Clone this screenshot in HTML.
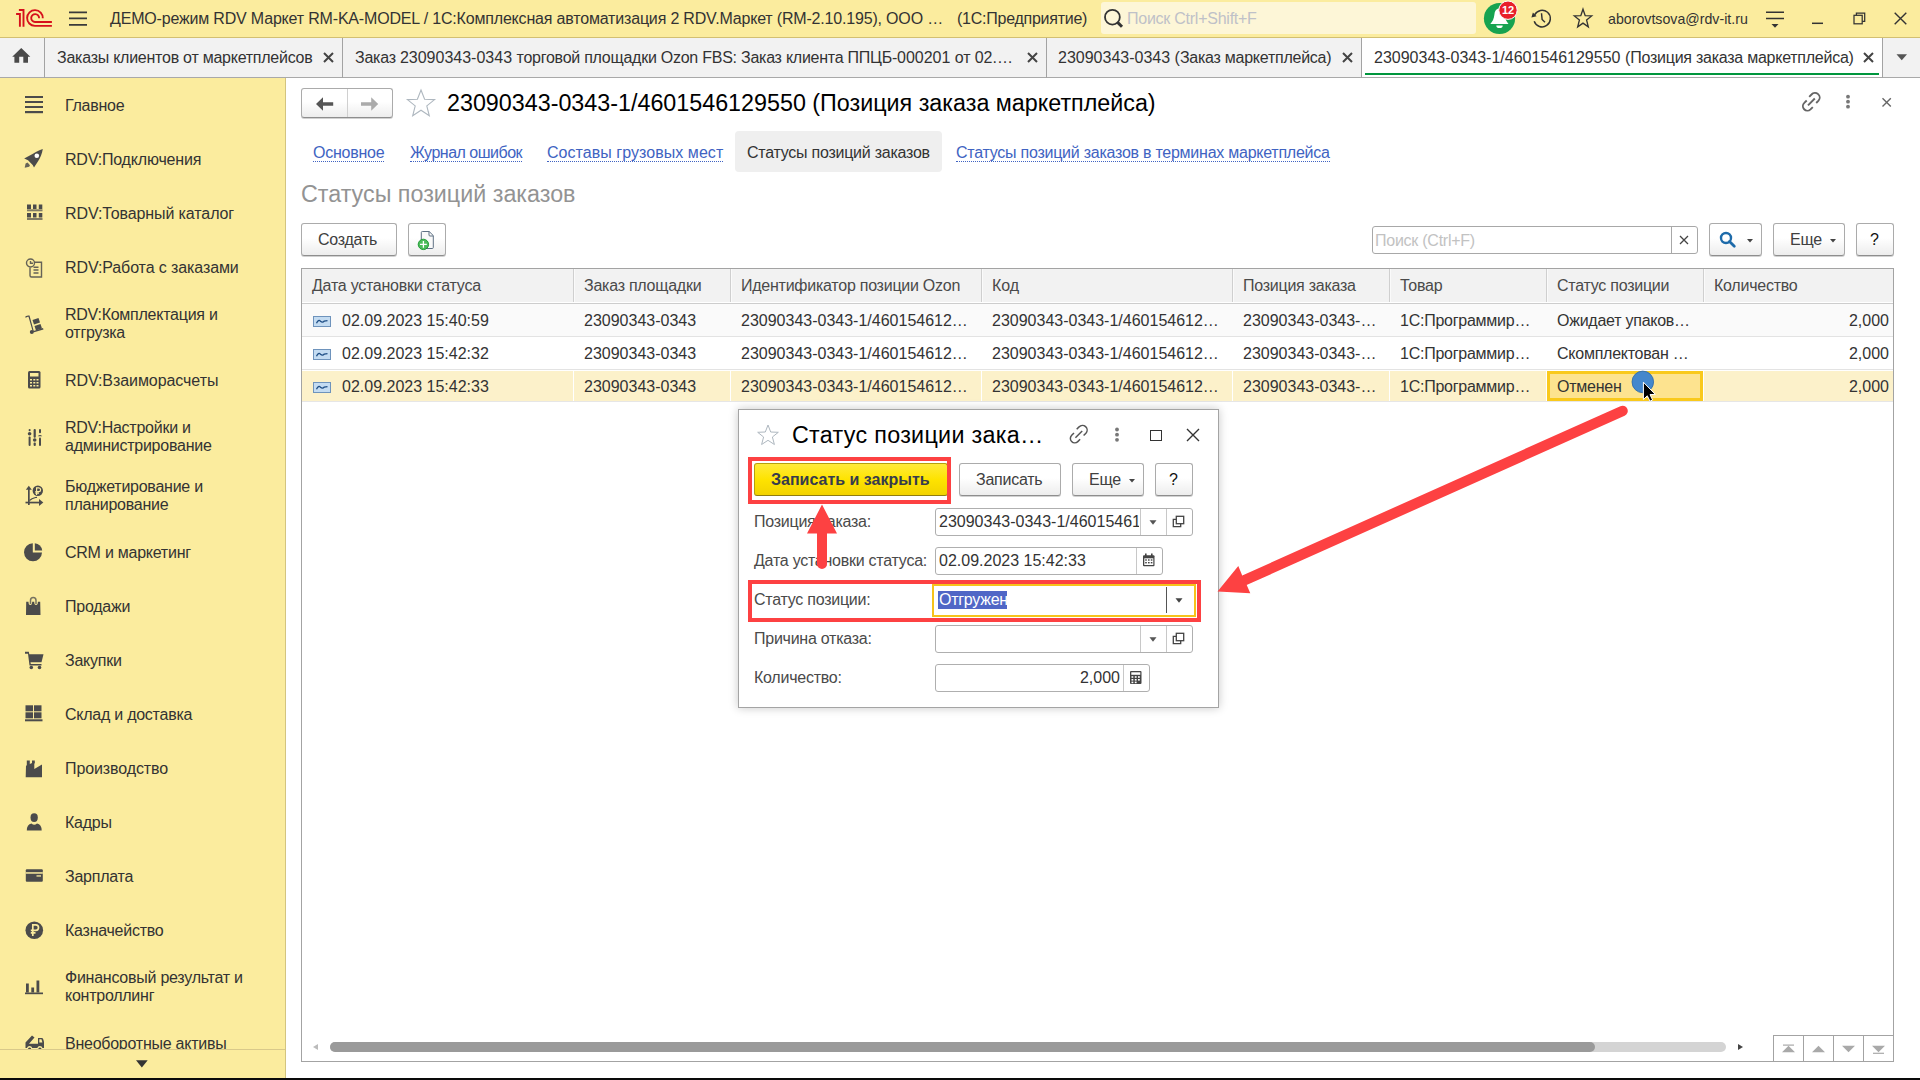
<!DOCTYPE html>
<html><head><meta charset="utf-8">
<style>
*{box-sizing:border-box}
html,body{margin:0;padding:0}
body{width:1920px;height:1080px;position:relative;overflow:hidden;background:#fff;font-family:"Liberation Sans",sans-serif;font-size:16px;color:#333}
.a{position:absolute}
.t{position:absolute;white-space:nowrap;line-height:18px}
.cy{letter-spacing:-0.25px}
svg{position:absolute;overflow:visible}
/* header */
#hdr{left:0;top:0;width:1920px;height:38px;background:#FBEC9E;border-bottom:1px solid #D2BF72}
#tabs{left:0;top:38px;width:1920px;height:40px;background:#F2F2F2;border-bottom:1px solid #A9A9A9}
.tsep{position:absolute;top:38px;width:1px;height:40px;background:#A3A3A3}
#side{left:0;top:78px;width:286px;height:1000px;background:#FBEC9E;border-right:1px solid #D3C47F;overflow:hidden}
.si{position:absolute;left:65px;white-space:nowrap;line-height:18px;color:#333;letter-spacing:-0.25px}
.btn{position:absolute;border:1px solid #ABABAB;border-bottom-color:#8E8E8E;border-radius:3px;background:linear-gradient(#fff 0%,#fff 45%,#EDEDED 100%);box-shadow:0 1px 0 rgba(0,0,0,.18)}
.link{color:#4063C2;border-bottom:1px dotted #4063C2}
</style></head><body>

<!-- ============ HEADER ============ -->
<div id="hdr" class="a"></div>
<!-- 1C logo -->
<svg width="60" height="36" style="left:0;top:0" viewBox="0 0 60 36">
 <g fill="none" stroke="#D6101C" stroke-width="1.9">
 <path d="M16.1 14 H19.9 V26.8"/>
 <path d="M18.9 10 H23.5 V26.8"/>
 <path d="M42.8 18.3 A7.85 7.85 0 1 0 34.9 25.85 H51.9" stroke-linecap="butt"/>
 <path d="M39.1 18.3 A3.95 3.95 0 1 0 35 22 H51.9"/>
 </g>
</svg>
<!-- hamburger -->
<svg width="20" height="20" style="left:68px;top:8px" viewBox="0 0 20 20"><path d="M1 4.4 H19 M1 10.4 H19 M1 16.8 H19" stroke="#3A3A3A" stroke-width="1.7"/></svg>
<div class="t" style="left:110px;top:10px;letter-spacing:-0.18px;color:#333">ДЕМО-режим RDV Маркет RM-KA-MODEL / 1С:Комплексная автоматизация 2 RDV.Маркет (RM-2.10.195), ООО …</div>
<div class="t cy" style="left:957px;top:10px;color:#333">(1С:Предприятие)</div>
<!-- search -->
<div class="a" style="left:1101px;top:2px;width:375px;height:32px;background:#FDF6D7;border-radius:3px"></div>
<svg width="24" height="24" style="left:1103px;top:8px" viewBox="0 0 24 24">
 <circle cx="9.4" cy="9.2" r="7.4" fill="none" stroke="#333" stroke-width="1.8"/>
 <path d="M14.6 14.4 L19 18.8" stroke="#333" stroke-width="3"/>
</svg>
<div class="t cy" style="left:1127px;top:10px;color:#BFC1C8">Поиск Ctrl+Shift+F</div>
<!-- bell -->
<svg width="36" height="36" style="left:1482px;top:1px" viewBox="0 0 36 36">
 <circle cx="17.5" cy="17.5" r="15.6" fill="#17A350"/>
 <path d="M8.3 23 C10.5 20.5 12 18 12.5 13 C13 9 15 7.5 17.5 7.5 C20 7.5 22 9 22.5 13 C23 18 24.5 20.5 26.5 23 Z" fill="#fff"/>
 <path d="M14.3 24.5 H20.7 A3.2 2.6 0 0 1 14.3 24.5 Z" fill="#fff"/>
 <circle cx="26" cy="9.2" r="9.2" fill="#E8202A" stroke="#fff" stroke-width="1"/>
 <text x="26" y="13.3" font-family="Liberation Sans" font-weight="bold" font-size="11" fill="#fff" text-anchor="middle">12</text>
</svg>
<!-- history -->
<svg width="22" height="22" style="left:1530px;top:8px" viewBox="0 0 22 22">
 <path d="M4.6 6.9 A8.3 8.3 0 1 1 4.2 13.3" fill="none" stroke="#333" stroke-width="1.45"/>
 <path d="M1.4 9.5 L6.6 8.3 L2.9 4.5 Z" fill="#333"/>
 <path d="M11.5 5.3 L12.1 11.4 L15 14.3" fill="none" stroke="#333" stroke-width="1.45"/>
</svg>
<!-- star -->
<svg width="22" height="22" style="left:1572px;top:8px" viewBox="0 0 22 22">
 <path d="M11 1.2 L13.2 7.6 L19.7 7.9 L14.6 12.1 L16.3 18.8 L11 15.1 L5.7 18.8 L7.4 12.1 L2.3 7.9 L8.8 7.6 Z" fill="none" stroke="#333" stroke-width="1.35" stroke-linejoin="miter"/>
</svg>
<div class="t" style="left:1608px;top:10px;font-size:14.2px;color:#333">aborovtsova@rdv-it.ru</div>
<!-- filter icon -->
<svg width="20" height="20" style="left:1765px;top:8px" viewBox="0 0 20 20"><path d="M1 4.2 H19 M1 10.5 H19" stroke="#333" stroke-width="1.4"/><path d="M6.5 16 H13.5 L10 19.8 Z" fill="#333"/></svg>
<!-- window buttons -->
<svg width="14" height="4" style="left:1811px;top:21px" viewBox="0 0 14 4"><path d="M1 2.3 H12" stroke="#333" stroke-width="1.5"/></svg>
<svg width="14" height="14" style="left:1853px;top:12px" viewBox="0 0 14 14">
 <rect x="1" y="3.3" width="8.2" height="8.5" fill="none" stroke="#333" stroke-width="1.25"/>
 <path d="M3.4 3.3 V1 H11.7 V9.3 H9.2" fill="none" stroke="#333" stroke-width="1.25"/>
</svg>
<svg width="13" height="13" style="left:1894px;top:11.5px" viewBox="0 0 13 13"><path d="M0.7 0.7 L12.3 12.3 M12.3 0.7 L0.7 12.3" stroke="#333" stroke-width="1.4"/></svg>

<!-- ============ TABS ============ -->
<div id="tabs" class="a"></div>
<div class="a" style="left:1362px;top:38px;width:520px;height:39px;background:#fff"></div>
<div class="a" style="left:1365px;top:73px;width:514px;height:2px;background:#00963E"></div>
<div class="tsep" style="left:44px"></div>
<div class="tsep" style="left:342px"></div>
<div class="tsep" style="left:1046px"></div>
<div class="tsep" style="left:1361px"></div>
<div class="tsep" style="left:1882px"></div>
<svg width="20" height="16" style="left:12px;top:48px" viewBox="0 0 20 16">
 <path d="M0.2 8.7 L9.25 0 L18.3 8.7 H16 V14.8 H11.3 V8.7 H7.2 V14.8 H2.4 V8.7 Z" fill="#4A4A4A"/>
</svg>
<div class="t cy" style="left:57px;top:49px">Заказы клиентов от маркетплейсов</div>
<svg width="11" height="11" style="left:323px;top:52px" viewBox="0 0 11 11"><path d="M1 1 L10 10 M10 1 L1 10" stroke="#444" stroke-width="2"/></svg>
<div class="t" style="left:355px;top:49px"><span class="cy">Заказ </span>23090343-0343 <span class="cy">торговой площадки Ozon FBS: Заказ клиента ППЦБ-</span>000201 <span class="cy">от</span> 02.…</div>
<svg width="11" height="11" style="left:1027px;top:52px" viewBox="0 0 11 11"><path d="M1 1 L10 10 M10 1 L1 10" stroke="#444" stroke-width="2"/></svg>
<div class="t" style="left:1058px;top:49px">23090343-0343 (<span class="cy">Заказ маркетплейса</span>)</div>
<svg width="11" height="11" style="left:1342px;top:52px" viewBox="0 0 11 11"><path d="M1 1 L10 10 M10 1 L1 10" stroke="#444" stroke-width="2"/></svg>
<div class="t" style="left:1374px;top:49px">23090343-0343-1/4601546129550 (<span class="cy">Позиция заказа маркетплейса</span>)</div>
<svg width="11" height="11" style="left:1863px;top:52px" viewBox="0 0 11 11"><path d="M1 1 L10 10 M10 1 L1 10" stroke="#444" stroke-width="2"/></svg>
<svg width="12" height="7" style="left:1896px;top:54px" viewBox="0 0 12 7"><path d="M0.5 0.3 H11 L5.75 6.3 Z" fill="#555"/></svg>

<!-- ============ SIDEBAR ============ -->
<div id="side" class="a">
</div>
<!--SIDEBAR_ITEMS-->
<div class="a" style="left:0;top:78px;width:285px;height:971px;overflow:hidden">
<div class="a" style="left:0;top:-78px;width:285px;height:1100px">
<div class="si" style="top:97px">Главное</div>
<svg width="19" height="19" style="left:25px;top:96px" viewBox="0 0 19 19"><rect x="0" y="0" width="18" height="2" fill="#4B4B4B"/><rect x="0" y="5" width="18" height="2" fill="#4B4B4B"/><rect x="0" y="10" width="18" height="2" fill="#4B4B4B"/><rect x="0" y="15" width="18" height="2.2" fill="#4B4B4B"/></svg>
<div class="si" style="top:151px;letter-spacing:-0.18px">RDV:Подключения</div>
<svg width="19" height="19" style="left:25px;top:150px" viewBox="0 0 19 19"><path d="M17.8 -0.9 C14 0.5 10.5 2.3 8 3.8 L-0.8 8.4 L3 10.3 L7.7 15 L9 17.5 L12.9 11.6 C15.3 8.3 17 4 17.8 -0.9 Z" fill="#4B4B4B"/><circle cx="11.8" cy="5.7" r="2.3" fill="#fff"/><path d="M-0.3 17.7 L0.6 13.6 L2.5 12.6 L5 15.2 L4.2 16.8 Z" fill="#4B4B4B" opacity="0.85"/></svg>
<div class="si" style="top:205px;letter-spacing:-0.1px">RDV:Товарный каталог</div>
<svg width="19" height="19" style="left:25px;top:204px" viewBox="0 0 19 19"><g fill="#4B4B4B"><rect x="2" y="0.5" width="4" height="4.5"/><rect x="8" y="0.5" width="3.5" height="4.5"/><rect x="13.8" y="0.5" width="3.5" height="4.5"/><rect x="2" y="5.3" width="15.5" height="2" opacity="0.7"/><rect x="2" y="9" width="4" height="4.5"/><rect x="8" y="9" width="3.5" height="4.5"/><rect x="13.8" y="9" width="3.5" height="4.5"/><rect x="2" y="14" width="15.5" height="2" opacity="0.7"/></g></svg>
<div class="si" style="top:259px;letter-spacing:-0.1px">RDV:Работа с заказами</div>
<svg width="19" height="19" style="left:25px;top:258px" viewBox="0 0 19 19"><g fill="none" stroke="#4B4B4B" stroke-width="1.4" opacity="0.85"><circle cx="5.5" cy="5" r="4"/><path d="M5.5 3 V5.3 H8"/><path d="M9.5 4.2 H16.5 V19 H6.5 Q5 19 5 17.5 V9.5"/><path d="M8.5 9.2 H13.5 M8.5 12 H13.5 M8.5 15 H13.5"/></g></svg>
<div class="si" style="top:306px">RDV:Комплектация и<br>отгрузка</div>
<svg width="19" height="19" style="left:25px;top:314px" viewBox="0 0 19 19"><g fill="#4B4B4B"><path d="M0 3 Q1 1 4.5 1.5 L9 18 L8 18.5 L3.5 2.8 Q2 2.6 1 3.8 Z"/><circle cx="6.8" cy="18" r="2"/><path d="M8.5 17 L18 14 L18.5 15.4 L9 18.3 Z"/><path d="M7.5 6 L13.5 4 L15 8.5 L9 10.5 Z"/><path d="M9.5 12 L15.5 10 L17 14.5 L11 16.5 Z"/></g></svg>
<div class="si" style="top:372px;letter-spacing:-0.07px">RDV:Взаиморасчеты</div>
<svg width="19" height="19" style="left:25px;top:371px" viewBox="0 0 19 19"><g fill="#4B4B4B"><rect x="3" y="0" width="12.5" height="17.5" rx="1.5"/></g><rect x="5" y="2" width="8.5" height="3.5" fill="#FBEC9E"/><g fill="#FBEC9E"><rect x="5" y="8" width="2" height="1.5"/><rect x="8.3" y="8" width="2" height="1.5"/><rect x="11.5" y="8" width="2" height="1.5"/><rect x="5" y="11" width="2" height="1.5"/><rect x="8.3" y="11" width="2" height="1.5"/><rect x="11.5" y="11" width="2" height="1.5"/><rect x="5" y="14" width="2" height="1.5"/><rect x="8.3" y="14" width="2" height="1.5"/><rect x="11.5" y="14" width="2" height="1.5"/></g></svg>
<div class="si" style="top:419px">RDV:Настройки и<br>администрирование</div>
<svg width="19" height="19" style="left:25px;top:428px" viewBox="0 0 19 19"><g fill="#4B4B4B"><rect x="3.6" y="1" width="2" height="2.3" rx="1"/><circle cx="4.6" cy="5.8" r="1.8"/><rect x="3.6" y="8.5" width="2" height="9.5" rx="1"/><rect x="8.6" y="1" width="2.2" height="8.8" rx="1"/><circle cx="9.7" cy="12" r="1.8"/><rect x="8.6" y="14.5" width="2.2" height="3.5" rx="1"/><rect x="14" y="1" width="2" height="4.3" rx="1"/><path d="M12.8 8.3 Q15 5.8 17.2 8.3 Z"/><rect x="14" y="9.5" width="2" height="8.5" rx="1"/></g></svg>
<div class="si" style="top:478px">Бюджетирование и<br>планирование</div>
<svg width="19" height="19" style="left:25px;top:486px" viewBox="0 0 19 19"><g fill="#4B4B4B"><path d="M0.8 3.7 L3.8 -0.2 L6.8 3.7 Z"/><rect x="3" y="3" width="1.7" height="16"/><rect x="0.5" y="15.7" width="14" height="1.7"/><path d="M14 13 L18.3 16.5 L14 20 Z"/><circle cx="12.8" cy="4.7" r="5.2"/><path d="M4.5 14.5 L7 12.7 L10.5 11.5 L12 11.3" fill="none" stroke="#4B4B4B" stroke-width="1.2"/></g><path d="M11.6 9 V1.8 H13.8 Q15.6 1.8 15.6 3.7 Q15.6 5.6 13.8 5.6 H10.3 M10.3 7.2 H14" fill="none" stroke="#FBEC9E" stroke-width="1.2"/></svg>
<div class="si" style="top:544px">CRM и маркетинг</div>
<svg width="19" height="19" style="left:25px;top:543px" viewBox="0 0 19 19"><g fill="#4B4B4B"><path d="M7.8 0.3 V9.5 H17 A9 9 0 1 1 7.8 0.3 Z"/><path d="M9.8 0.3 A8 8 0 0 1 17.2 7.6 H9.8 Z"/></g></svg>
<div class="si" style="top:598px">Продажи</div>
<svg width="19" height="19" style="left:25px;top:597px" viewBox="0 0 19 19"><g fill="#4B4B4B"><path d="M1.2 4.8 H3.5 Q3.5 8 5.3 8 Q7.2 8 7.2 4.8 H9.2 Q9.2 8 11 8 Q12.9 8 12.9 4.8 H15.2 L15.5 18 H1 Z"/></g><path d="M5.5 7 V3.5 Q5.5 0.6 8.2 0.6 Q11 0.6 11 3.5 V7" fill="none" stroke="#4B4B4B" stroke-width="1.5" opacity="0.75"/></svg>
<div class="si" style="top:652px">Закупки</div>
<svg width="19" height="19" style="left:25px;top:651px" viewBox="0 0 19 19"><g fill="#4B4B4B"><path d="M0 0.8 H3.8 L4.3 3.2 H18.5 L16.5 11.3 H5.5 L5.8 13 H16.5 V14.5 H4.5 L3 2.7 H0 Z"/><circle cx="6.3" cy="16.5" r="1.8"/><circle cx="14.5" cy="16.5" r="1.8"/></g></svg>
<div class="si" style="top:706px">Склад и доставка</div>
<svg width="19" height="19" style="left:25px;top:705px" viewBox="0 0 19 19"><g fill="#4B4B4B"><rect x="0.5" y="0.3" width="7.5" height="6"/><rect x="9" y="0.3" width="7.5" height="6"/><rect x="0.5" y="7.3" width="7.5" height="6"/><rect x="9" y="7.3" width="7.5" height="6"/><rect x="0" y="14.3" width="17.5" height="2"/></g></svg>
<div class="si" style="top:760px;letter-spacing:-0.1px">Производство</div>
<svg width="19" height="19" style="left:25px;top:759px" viewBox="0 0 19 19"><g fill="#4B4B4B"><path d="M1 6.8 L9.3 3 V10 L17 5.5 V18.3 H0.7 Z"/><path d="M1.8 1.5 H4.8 V6.5 L1.8 7.5 Z"/><path d="M7 1.5 H9.8 V4.3 L7 5.3 Z"/></g></svg>
<div class="si" style="top:814px">Кадры</div>
<svg width="19" height="19" style="left:25px;top:813px" viewBox="0 0 19 19"><g fill="#4B4B4B"><path d="M5.5 4.5 Q5.5 0.3 9.2 0.3 Q12.8 0.3 12.8 4.5 Q12.8 9 9.2 9 Q5.5 9 5.5 4.5 Z"/><path d="M1.8 17.5 Q1.8 11.5 6.5 10.5 Q9.2 13 12 10.5 Q16.7 11.5 16.7 17.5 Z"/></g></svg>
<div class="si" style="top:868px">Зарплата</div>
<svg width="19" height="19" style="left:25px;top:867px" viewBox="0 0 19 19"><g fill="#4B4B4B"><rect x="0.8" y="2.3" width="17" height="12.5" rx="1"/></g><rect x="0.8" y="5.2" width="17" height="1.5" fill="#FBEC9E"/><rect x="11.5" y="8.3" width="4.5" height="1.3" fill="#FBEC9E"/></svg>
<div class="si" style="top:922px">Казначейство</div>
<svg width="19" height="19" style="left:25px;top:921px" viewBox="0 0 19 19"><circle cx="9.3" cy="9.2" r="8.8" fill="#4B4B4B"/><path d="M7.8 15 V3.8 H10.8 Q13.5 3.8 13.5 6.6 Q13.5 9.4 10.8 9.4 H5.8 M5.8 11.8 H10.5" fill="none" stroke="#FBEC9E" stroke-width="1.7"/></svg>
<div class="si" style="top:969px">Финансовый результат и<br>контроллинг</div>
<svg width="19" height="19" style="left:25px;top:978px" viewBox="0 0 19 19"><g fill="#4B4B4B"><rect x="1" y="5.5" width="2.8" height="9"/><rect x="6.3" y="9.5" width="2.8" height="5"/><rect x="11.5" y="2.5" width="2.8" height="12"/><rect x="0" y="14.5" width="18" height="1.7"/></g></svg>
<div class="si" style="top:1035px">Внеоборотные активы</div>
<svg width="19" height="19" style="left:25px;top:1034px" viewBox="0 0 19 19"><g fill="#4B4B4B"><path d="M0.5 8.5 L7 1.5 L9.5 3.5 L4 9.7 L13 9.7 V4 H17 Q18 4 18.5 6 L19 8 V14 H17.5 A2.7 2.7 0 0 0 12.3 14 H7.2 A2.7 2.7 0 0 0 2 14 H0.5 Z"/><circle cx="4.6" cy="15" r="1.6"/><circle cx="14.9" cy="15" r="1.6"/></g><path d="M14.3 5.3 H16.5 L17.4 8.5 H14.3 Z" fill="#FBEC9E"/></svg>
</div></div>
<div class="a" style="left:0;top:1049px;width:285px;height:1px;background:#D9C98A"></div>
<svg width="12" height="8" style="left:136px;top:1060px" viewBox="0 0 12 8"><path d="M0 0.3 H11.7 L5.85 7.5 Z" fill="#333"/></svg>
<!--CONTENT-->
<!-- ============ CONTENT: title ============ -->
<div class="btn" style="left:301px;top:88px;width:92px;height:30px"></div>
<div class="a" style="left:347px;top:89px;width:1px;height:28px;background:#D0D0D0"></div>
<svg width="18" height="14" style="left:316px;top:96.5px" viewBox="0 0 18 14"><path d="M0 7 L7 0.3 V5.3 H17.2 V8.7 H7 V13.7 Z" fill="#555"/></svg>
<svg width="18" height="14" style="left:361px;top:96.5px" viewBox="0 0 18 14"><path d="M17.2 7 L10.2 0.3 V5.3 H0 V8.7 H10.2 V13.7 Z" fill="#ABABAB"/></svg>
<svg width="30" height="29" style="left:406px;top:88.5px" viewBox="0 0 30 29"><path d="M15 1 L18.6 10.2 L28.6 10.6 L20.8 16.9 L23.3 26.8 L15 21.2 L6.7 26.8 L9.2 16.9 L1.4 10.6 L11.4 10.2 Z" fill="none" stroke="#AEB7BF" stroke-width="1.1"/></svg>
<div class="t" style="left:447px;top:90px;font-size:23.3px;line-height:26px;color:#000">23090343-0343-1/4601546129550 (Позиция заказа маркетплейса)</div>
<!-- link / more / close -->
<svg width="21" height="20" style="left:1801px;top:92px" viewBox="0 0 21 20">
 <path d="M8.2 4.8 L10.5 2.5 A3.6 3.6 0 0 1 17.5 8.7 L15.2 11" fill="none" stroke="#666" stroke-width="1.9" stroke-linecap="butt"/>
 <path d="M5.7 8.5 L3.3 10.9 A3.6 3.6 0 0 0 9.5 17.4 L11.8 15.1" fill="none" stroke="#666" stroke-width="1.9"/>
 <path d="M7 13.3 L13.8 6.5" stroke="#666" stroke-width="1.9"/>
</svg>
<svg width="6" height="16" style="left:1845px;top:94px" viewBox="0 0 6 16"><circle cx="3" cy="2.7" r="1.9" fill="#777"/><circle cx="3" cy="7.7" r="1.9" fill="#777"/><circle cx="3" cy="12.7" r="1.9" fill="#777"/></svg>
<svg width="11" height="11" style="left:1881px;top:97px" viewBox="0 0 11 11"><path d="M1.5 1.3 L9.8 9.6 M9.8 1.3 L1.5 9.6" stroke="#666" stroke-width="1.4"/></svg>

<!-- ============ form tabs / links ============ -->
<div class="t cy" style="left:313px;top:144px"><span class="link">Основное</span></div>
<div class="t" style="left:410px;top:144px;letter-spacing:-0.5px"><span class="link">Журнал ошибок</span></div>
<div class="t" style="left:547px;top:144px;letter-spacing:0.05px"><span class="link">Составы грузовых мест</span></div>
<div class="a" style="left:735px;top:131px;width:207px;height:41px;background:#EFEFEF;border-radius:4px"></div>
<div class="t cy" style="left:747px;top:144px;color:#333">Статусы позиций заказов</div>
<div class="t cy" style="left:956px;top:144px"><span class="link">Статусы позиций заказов в терминах маркетплейса</span></div>
<div class="t" style="left:301px;top:181px;font-size:23.3px;line-height:26px;color:#939393">Статусы позиций заказов</div>

<!-- ============ toolbar ============ -->
<div class="btn" style="left:301px;top:223px;width:96px;height:33px"></div>
<div class="t cy" style="left:318px;top:231px;color:#404040">Создать</div>
<div class="btn" style="left:408px;top:223px;width:38px;height:33px"></div>
<svg width="20" height="20" style="left:417px;top:230px" viewBox="0 0 20 20">
 <path d="M4.3 2.5 Q4.3 1.5 5.3 1.5 H12.2 L16.3 5.6 V17.5 Q16.3 18.5 15.3 18.5 H5.3 Q4.3 18.5 4.3 17.5 Z" fill="#FAFAFA" stroke="#5F7184" stroke-width="1"/>
 <path d="M12 1.5 V5 Q12 6 13 6 H16.3" fill="none" stroke="#5F7184" stroke-width="1"/>
 <circle cx="6.4" cy="14.4" r="5.2" fill="#4CBB5A" stroke="#14962A" stroke-width="0.9"/>
 <path d="M6.4 11 V17.8 M3 14.4 H9.8" stroke="#fff" stroke-width="1.3"/>
</svg>
<!-- search -->
<div class="a" style="left:1372px;top:226px;width:326px;height:28px;border:1px solid #A8A8A8;border-radius:3px;background:#fff"></div>
<div class="a" style="left:1671px;top:227px;width:1px;height:26px;background:#A8A8A8"></div>
<div class="t cy" style="left:1375px;top:232px;color:#C2C2C2">Поиск (Ctrl+F)</div>
<svg width="10" height="10" style="left:1679px;top:235px" viewBox="0 0 10 10"><path d="M1 1 L9 9 M9 1 L1 9" stroke="#444" stroke-width="1.3"/></svg>
<div class="btn" style="left:1709px;top:223px;width:53px;height:33px"></div>
<svg width="18" height="18" style="left:1719px;top:231px" viewBox="0 0 18 18"><circle cx="7" cy="7" r="5" fill="none" stroke="#1E6BAA" stroke-width="2.4"/><path d="M10.5 10.5 L15.3 15.3" stroke="#1E6BAA" stroke-width="2.8" stroke-linecap="round"/></svg>
<svg width="7" height="4" style="left:1747px;top:238.5px" viewBox="0 0 7 4"><path d="M0 0 H6 L3 3.5 Z" fill="#444"/></svg>
<div class="btn" style="left:1773px;top:223px;width:72px;height:33px"></div>
<div class="t cy" style="left:1790px;top:231px;color:#404040">Еще</div>
<svg width="7" height="4" style="left:1830px;top:238.5px" viewBox="0 0 7 4"><path d="M0 0 H6 L3 3.5 Z" fill="#444"/></svg>
<div class="btn" style="left:1856px;top:223px;width:38px;height:33px"></div>
<div class="t" style="left:1870px;top:231px;color:#111">?</div>
<!--TABLE-->
<div class="a" style="left:301px;top:268px;width:1593px;height:794px;border:1px solid #A3A3A3;background:#fff"></div>
<div class="a" style="left:302px;top:269px;width:1591px;height:35px;background:#F2F2F2;border-bottom:1px solid #CDCDCD"></div>
<div class="a" style="left:302px;top:302px;width:1591px;height:1px;background:#FFFFFF"></div>
<div class="a" style="left:573px;top:269px;width:1px;height:33px;background:#CFCFCF"></div>
<div class="a" style="left:574px;top:269px;width:1px;height:33px;background:#FAFAFA"></div>
<div class="a" style="left:730px;top:269px;width:1px;height:33px;background:#CFCFCF"></div>
<div class="a" style="left:731px;top:269px;width:1px;height:33px;background:#FAFAFA"></div>
<div class="a" style="left:981px;top:269px;width:1px;height:33px;background:#CFCFCF"></div>
<div class="a" style="left:982px;top:269px;width:1px;height:33px;background:#FAFAFA"></div>
<div class="a" style="left:1232px;top:269px;width:1px;height:33px;background:#CFCFCF"></div>
<div class="a" style="left:1233px;top:269px;width:1px;height:33px;background:#FAFAFA"></div>
<div class="a" style="left:1389px;top:269px;width:1px;height:33px;background:#CFCFCF"></div>
<div class="a" style="left:1390px;top:269px;width:1px;height:33px;background:#FAFAFA"></div>
<div class="a" style="left:1546px;top:269px;width:1px;height:33px;background:#CFCFCF"></div>
<div class="a" style="left:1547px;top:269px;width:1px;height:33px;background:#FAFAFA"></div>
<div class="a" style="left:1703px;top:269px;width:1px;height:33px;background:#CFCFCF"></div>
<div class="a" style="left:1704px;top:269px;width:1px;height:33px;background:#FAFAFA"></div>
<div class="t cy" style="left:312px;top:277px;color:#4A4A4A">Дата установки статуса</div>
<div class="t cy" style="left:584px;top:277px;color:#4A4A4A">Заказ площадки</div>
<div class="t cy" style="left:741px;top:277px;color:#4A4A4A">Идентификатор позиции Ozon</div>
<div class="t" style="left:992px;top:277px;color:#4A4A4A">Код</div>
<div class="t cy" style="left:1243px;top:277px;color:#4A4A4A">Позиция заказа</div>
<div class="t cy" style="left:1400px;top:277px;color:#4A4A4A">Товар</div>
<div class="t cy" style="left:1557px;top:277px;color:#4A4A4A">Статус позиции</div>
<div class="t cy" style="left:1714px;top:277px;color:#4A4A4A">Количество</div>
<div class="a" style="left:302px;top:304px;width:1591px;height:33px;background:#FAFAFA;border-bottom:1px solid #E3E3E3"></div>
<svg width="19" height="11" style="left:313px;top:316px" viewBox="0 0 19 11"><rect x="0.5" y="0.5" width="17" height="10" fill="#C4DCF2" stroke="#6E93BC" stroke-width="1"/><path d="M3.5 7.3 Q5.5 3 7.5 5.2 Q9.5 7.2 11.3 5 L14.5 4.6" fill="none" stroke="#1F4F86" stroke-width="1.3"/></svg>
<div class="t" style="left:342px;top:312px;color:#333;">02.09.2023 15:40:59</div>
<div class="t" style="left:584px;top:312px;color:#333;">23090343-0343</div>
<div class="t" style="left:741px;top:312px;color:#333;">23090343-0343-1/460154612…</div>
<div class="t" style="left:992px;top:312px;color:#333;">23090343-0343-1/460154612…</div>
<div class="t" style="left:1243px;top:312px;color:#333;">23090343-0343-…</div>
<div class="t" style="left:1400px;top:312px;color:#333;letter-spacing:-0.25px">1С:Программир…</div>
<div class="t" style="left:1557px;top:312px;color:#333;letter-spacing:-0.25px">Ожидает упаков…</div>
<div class="t" style="left:1788px;top:312px;width:101px;text-align:right;color:#333">2,000</div>
<div class="a" style="left:302px;top:337px;width:1591px;height:33px;background:#FFFFFF;border-bottom:1px solid #E3E3E3"></div>
<svg width="19" height="11" style="left:313px;top:349px" viewBox="0 0 19 11"><rect x="0.5" y="0.5" width="17" height="10" fill="#C4DCF2" stroke="#6E93BC" stroke-width="1"/><path d="M3.5 7.3 Q5.5 3 7.5 5.2 Q9.5 7.2 11.3 5 L14.5 4.6" fill="none" stroke="#1F4F86" stroke-width="1.3"/></svg>
<div class="t" style="left:342px;top:345px;color:#333;">02.09.2023 15:42:32</div>
<div class="t" style="left:584px;top:345px;color:#333;">23090343-0343</div>
<div class="t" style="left:741px;top:345px;color:#333;">23090343-0343-1/460154612…</div>
<div class="t" style="left:992px;top:345px;color:#333;">23090343-0343-1/460154612…</div>
<div class="t" style="left:1243px;top:345px;color:#333;">23090343-0343-…</div>
<div class="t" style="left:1400px;top:345px;color:#333;letter-spacing:-0.25px">1С:Программир…</div>
<div class="t" style="left:1557px;top:345px;color:#333;letter-spacing:-0.25px">Скомплектован …</div>
<div class="t" style="left:1788px;top:345px;width:101px;text-align:right;color:#333">2,000</div>
<div class="a" style="left:302px;top:371px;width:1591px;height:30px;background:#FCF1CA"></div>
<div class="a" style="left:302px;top:401px;width:1591px;height:1px;background:#E6E6E6"></div>
<div class="a" style="left:573px;top:371px;width:1px;height:30px;background:#fff"></div>
<div class="a" style="left:730px;top:371px;width:1px;height:30px;background:#fff"></div>
<div class="a" style="left:981px;top:371px;width:1px;height:30px;background:#fff"></div>
<div class="a" style="left:1232px;top:371px;width:1px;height:30px;background:#fff"></div>
<div class="a" style="left:1389px;top:371px;width:1px;height:30px;background:#fff"></div>
<div class="a" style="left:1546px;top:371px;width:1px;height:30px;background:#fff"></div>
<div class="a" style="left:1703px;top:371px;width:1px;height:30px;background:#fff"></div>
<svg width="19" height="11" style="left:313px;top:382px" viewBox="0 0 19 11"><rect x="0.5" y="0.5" width="17" height="10" fill="#C4DCF2" stroke="#6E93BC" stroke-width="1"/><path d="M3.5 7.3 Q5.5 3 7.5 5.2 Q9.5 7.2 11.3 5 L14.5 4.6" fill="none" stroke="#1F4F86" stroke-width="1.3"/></svg>
<div class="t" style="left:342px;top:378px;color:#333;">02.09.2023 15:42:33</div>
<div class="t" style="left:584px;top:378px;color:#333;">23090343-0343</div>
<div class="t" style="left:741px;top:378px;color:#333;">23090343-0343-1/460154612…</div>
<div class="t" style="left:992px;top:378px;color:#333;">23090343-0343-1/460154612…</div>
<div class="t" style="left:1243px;top:378px;color:#333;">23090343-0343-…</div>
<div class="t" style="left:1400px;top:378px;color:#333;letter-spacing:-0.25px">1С:Программир…</div>
<div class="t" style="left:1557px;top:378px;color:#333;letter-spacing:-0.25px">Отменен</div>
<div class="t" style="left:1788px;top:378px;width:101px;text-align:right;color:#333">2,000</div>
<div class="a" style="left:1547px;top:371px;width:156px;height:30px;background:#FDE38F;border:3px solid #F9C91C"></div>
<div class="t cy" style="left:1557px;top:378px;color:#333">Отменен</div>
<svg width="8" height="8" style="left:312px;top:1043px" viewBox="0 0 8 8"><path d="M1 4 L6 1 V7 Z" fill="#BBBBBB"/></svg>
<div class="a" style="left:330px;top:1042px;width:1396px;height:10px;border-radius:5px;background:#D4D4D4"></div>
<div class="a" style="left:330px;top:1042px;width:1265px;height:10px;border-radius:5px;background:#9A9A9A"></div>
<svg width="8" height="8" style="left:1736px;top:1043px" viewBox="0 0 8 8"><path d="M7 4 L2 1 V7 Z" fill="#444"/></svg>
<div class="a" style="left:1773px;top:1035px;width:121px;height:27px;border:1px solid #A3A3A3;background:#fff"></div>
<div class="a" style="left:1803px;top:1035px;width:1px;height:27px;background:#A3A3A3"></div>
<div class="a" style="left:1833px;top:1035px;width:1px;height:27px;background:#A3A3A3"></div>
<div class="a" style="left:1863px;top:1035px;width:1px;height:27px;background:#A3A3A3"></div>
<svg width="120" height="26" style="left:1773px;top:1035px" viewBox="0 0 120 26"><rect x="10" y="9.5" width="11" height="1.2" fill="#A9A9A9"/><path d="M9 17.2 L15.5 10.8 L22 17.2 Z" fill="#A9A9A9"/><path d="M39 17.2 L45.5 10.8 L52 17.2 Z" fill="#A9A9A9"/><path d="M69 10.8 L75.5 17.2 L82 10.8 Z" fill="#A9A9A9"/><path d="M99 10.8 L105.5 17.2 L112 10.8 Z" fill="#A9A9A9"/><rect x="100" y="17.7" width="11" height="1.2" fill="#A9A9A9"/></svg>
<svg width="30" height="30" style="left:1628px;top:368px" viewBox="0 0 30 30"><circle cx="14.8" cy="13.9" r="10.8" fill="#4487CC" stroke="#2E69A6" stroke-width="0.8"/><path d="M15.4 14.2 L15.4 31.5 L19.3 27.8 L22 33.2 L24.6 32 L22 26.6 L27.3 26.4 Z" fill="#000" stroke="#fff" stroke-width="1"/></svg>
<!--DIALOG-->
<!-- ============ DIALOG ============ -->
<div class="a" style="left:738px;top:409px;width:481px;height:299px;background:#fff;border:1px solid #A4A4A4;box-shadow:0 0 9px rgba(0,0,0,.22)"></div>
<svg width="24" height="22" style="left:756px;top:424px" viewBox="0 0 24 22"><path d="M12 1 L14.7 8 L22.3 8.3 L16.4 13 L18.4 20.5 L12 16.3 L5.6 20.5 L7.6 13 L1.7 8.3 L9.3 8 Z" fill="none" stroke="#AEB7BF" stroke-width="1"/></svg>
<div class="t" style="left:792px;top:422px;font-size:23.3px;line-height:26px;color:#000;letter-spacing:0.3px">Статус позиции зака…</div>
<svg width="21" height="21" style="left:1068px;top:424px" viewBox="0 0 21 21">
 <path d="M8.7 5.2 L11 2.9 A3.5 3.5 0 0 1 17.9 9.2 L15.6 11.5" fill="none" stroke="#555" stroke-width="1.5"/>
 <path d="M6 9 L3.7 11.3 A3.5 3.5 0 0 0 9.8 17.6 L12.1 15.3" fill="none" stroke="#555" stroke-width="1.5"/>
 <path d="M7.4 13.8 L14.2 7" stroke="#555" stroke-width="1.5"/>
</svg>
<svg width="6" height="16" style="left:1114px;top:427px" viewBox="0 0 6 16"><circle cx="3" cy="2.5" r="1.9" fill="#777"/><circle cx="3" cy="7.7" r="1.9" fill="#777"/><circle cx="3" cy="12.8" r="1.9" fill="#777"/></svg>
<div class="a" style="left:1150px;top:430px;width:11.5px;height:11px;border:1.6px solid #333"></div>
<svg width="14" height="14" style="left:1186px;top:428px" viewBox="0 0 14 14"><path d="M1 1 L13 13 M13 1 L1 13" stroke="#333" stroke-width="1.4"/></svg>

<!-- buttons -->
<div class="a" style="left:754px;top:463px;width:194px;height:33px;border:1px solid #B59F0E;border-bottom-color:#8F7D10;border-radius:3px;background:linear-gradient(#FFEA3A 0%,#FEE300 50%,#F2D300 100%)"></div>
<div class="t" style="left:771px;top:471px;font-weight:bold;color:#363B4D">Записать и закрыть</div>
<div class="a" style="left:748px;top:457px;width:203px;height:47px;border:4px solid #FD4142"></div>
<div class="btn" style="left:959px;top:463px;width:102px;height:33px"></div>
<div class="t cy" style="left:976px;top:471px;color:#404040">Записать</div>
<div class="btn" style="left:1072px;top:463px;width:72px;height:33px"></div>
<div class="t cy" style="left:1089px;top:471px;color:#404040">Еще</div>
<svg width="7" height="4" style="left:1129px;top:478.5px" viewBox="0 0 7 4"><path d="M0 0 H6 L3 3.5 Z" fill="#444"/></svg>
<div class="btn" style="left:1155px;top:463px;width:38px;height:33px"></div>
<div class="t" style="left:1169px;top:471px;color:#111">?</div>

<!-- fields -->
<div class="t cy" style="left:754px;top:513px;color:#4A4A4A">Позиция заказа:</div>
<div class="a" style="left:935px;top:508px;width:258px;height:28px;border:1px solid #AFAFAF;border-radius:3px;background:#fff"></div>
<div class="a" style="left:1140px;top:509px;width:1px;height:26px;background:#C8C8C8"></div>
<div class="a" style="left:1166px;top:509px;width:1px;height:26px;background:#C8C8C8"></div>
<div class="t" style="left:939px;top:513px;width:200px;overflow:hidden;color:#333">23090343-0343-1/4601546129550</div>
<svg width="8" height="5" style="left:1149px;top:520px" viewBox="0 0 8 5"><path d="M0.5 0.3 H7.5 L4 4.7 Z" fill="#555"/></svg>
<svg width="13" height="13" style="left:1172px;top:515px" viewBox="0 0 13 13"><rect x="4.3" y="1.3" width="7.4" height="7.4" fill="none" stroke="#444" stroke-width="1.3"/><path d="M4.3 4.3 H1.3 V11.7 H8.7 V8.7" fill="none" stroke="#444" stroke-width="1.3"/></svg>

<div class="t cy" style="left:754px;top:552px;color:#4A4A4A">Дата установки статуса:</div>
<div class="a" style="left:935px;top:547px;width:228px;height:28px;border:1px solid #AFAFAF;border-radius:3px;background:#fff"></div>
<div class="a" style="left:1136px;top:548px;width:1px;height:26px;background:#C8C8C8"></div>
<div class="t" style="left:939px;top:552px;color:#333">02.09.2023 15:42:33</div>
<svg width="14" height="14" style="left:1142px;top:553px" viewBox="0 0 14 14"><rect x="1" y="2.2" width="11.5" height="11" rx="1" fill="#444"/><rect x="2.3" y="5.3" width="9" height="6.7" fill="#fff"/><g fill="#444"><rect x="3.2" y="6.3" width="1.6" height="1.4"/><rect x="6" y="6.3" width="1.6" height="1.4"/><rect x="8.8" y="6.3" width="1.6" height="1.4"/><rect x="3.2" y="9" width="1.6" height="1.4"/><rect x="6" y="9" width="1.6" height="1.4"/><rect x="8.8" y="9" width="1.6" height="1.4"/></g><rect x="3" y="0.5" width="1.6" height="3" fill="#444"/><rect x="9" y="0.5" width="1.6" height="3" fill="#444"/></svg>

<div class="t cy" style="left:754px;top:591px;color:#4A4A4A">Статус позиции:</div>
<div class="a" style="left:932px;top:584px;width:264px;height:33px;border:2px solid #F6C31B;background:#fff"></div>
<div class="a" style="left:1166px;top:587px;width:1px;height:26px;background:#555"></div>
<div class="a" style="left:938px;top:591px;width:69px;height:18px;background:#5066C6"></div>
<div class="t cy" style="left:939px;top:591px;color:#fff">Отгружен</div>
<svg width="8" height="5" style="left:1175px;top:597.5px" viewBox="0 0 8 5"><path d="M0.5 0.3 H7.5 L4 4.7 Z" fill="#444"/></svg>
<div class="a" style="left:748px;top:580px;width:453px;height:42px;border:4px solid #FD4142"></div>

<div class="t cy" style="left:754px;top:630px;color:#4A4A4A">Причина отказа:</div>
<div class="a" style="left:935px;top:625px;width:258px;height:28px;border:1px solid #AFAFAF;border-radius:3px;background:#fff"></div>
<div class="a" style="left:1140px;top:626px;width:1px;height:26px;background:#C8C8C8"></div>
<div class="a" style="left:1166px;top:626px;width:1px;height:26px;background:#C8C8C8"></div>
<svg width="8" height="5" style="left:1149px;top:637px" viewBox="0 0 8 5"><path d="M0.5 0.3 H7.5 L4 4.7 Z" fill="#555"/></svg>
<svg width="13" height="13" style="left:1172px;top:632px" viewBox="0 0 13 13"><rect x="4.3" y="1.3" width="7.4" height="7.4" fill="none" stroke="#444" stroke-width="1.3"/><path d="M4.3 4.3 H1.3 V11.7 H8.7 V8.7" fill="none" stroke="#444" stroke-width="1.3"/></svg>

<div class="t cy" style="left:754px;top:669px;color:#4A4A4A">Количество:</div>
<div class="a" style="left:935px;top:664px;width:215px;height:28px;border:1px solid #AFAFAF;border-radius:3px;background:#fff"></div>
<div class="a" style="left:1123px;top:665px;width:1px;height:26px;background:#C8C8C8"></div>
<div class="t" style="left:1019px;top:669px;width:101px;text-align:right;color:#333">2,000</div>
<svg width="14" height="15" style="left:1129px;top:670px" viewBox="0 0 14 15"><rect x="1" y="1" width="11.5" height="13" rx="1" fill="#444"/><rect x="2.3" y="2.3" width="9" height="2.5" fill="#fff"/><g fill="#fff"><rect x="2.5" y="6.2" width="1.8" height="1.6"/><rect x="5.8" y="6.2" width="1.8" height="1.6"/><rect x="9" y="6.2" width="1.8" height="1.6"/><rect x="2.5" y="9" width="1.8" height="1.6"/><rect x="5.8" y="9" width="1.8" height="1.6"/><rect x="9" y="9" width="1.8" height="1.6"/><rect x="2.5" y="11.6" width="1.8" height="1.6"/><rect x="5.8" y="11.6" width="1.8" height="1.6"/></g></svg>

<!-- arrows -->
<svg width="1920" height="1080" style="left:0;top:0;pointer-events:none" viewBox="0 0 1920 1080">
 <path d="M822 504.5 L837 533.5 L827 533.5 L827 564 A5 5 0 0 1 817 564 L817 533.5 L807 533.5 Z" fill="#FD4142"/>
 <path d="M1622.5 411 L1245 580" stroke="#FD4142" stroke-width="10.5" stroke-linecap="round"/>
 <path d="M1217.5 591.5 L1238.3 566.1 L1242 575 L1246.4 584.2 L1250.3 593.3 Z" fill="#FD4142"/>
</svg>
<!-- bottom black line -->
<div class="a" style="left:0;top:1078px;width:1920px;height:2px;background:#0A0A0A"></div>
<!--END-->




</body></html>
